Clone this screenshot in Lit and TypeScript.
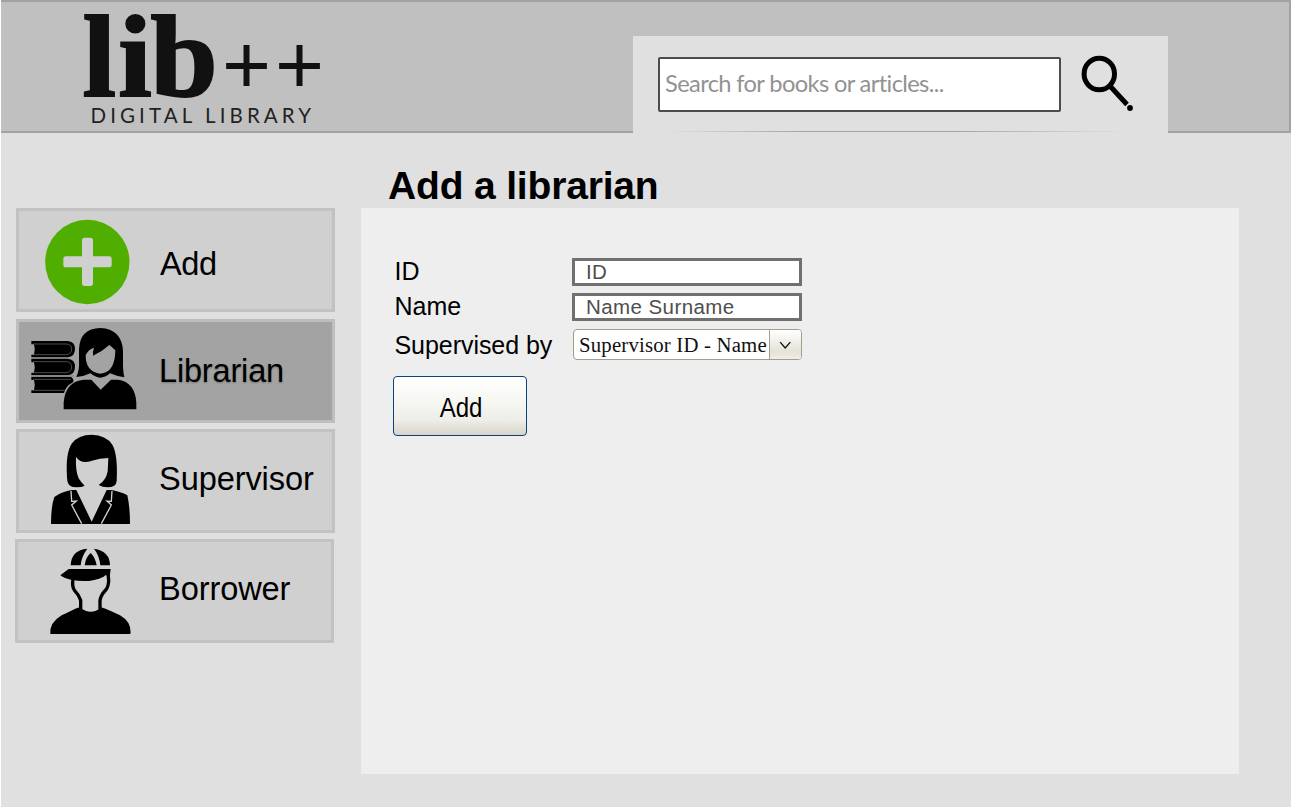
import { LitElement, html, svg, css } from "lit";
import { customElement, property, state } from "lit/decorators.js";
import { classMap } from "lit/directives/class-map.js";

const addIcon = svg`
  <circle cx="262" cy="186" r="126.5" fill="#50ae00"/>
  <path d="M254 113h17q8 0 8 8v48h48q8 0 8 8v17q0 8-8 8h-48v48q0 8-8 8h-17q-8 0-8-8v-48h-48q-8 0-8-8v-17q0-8 8-8h48v-48q0-8 8-8z" fill="#d0d0d0"/>`;

const librarianIcon = svg`
  <g>
    <path d="M94 78H203Q225 80 225 102Q225 125 203 127H94V119H102Q107 103 102 88H94Z"/>
    <path d="M94 131H203Q225 133 225 155Q225 178 203 181H94V173H102Q107 157 102 142H94Z"/>
    <path d="M94 185H212Q222 190 220 201L205 211Q197 219 192 234H94V226H102Q107 211 102 195H94Z"/>
    <path d="M99 87H199Q215 88 215 102Q215 117 199 119H99M99 140H199Q215 142 215 156Q215 170 199 173H99M99 193H212M99 226H194" fill="none" stroke="#707070" stroke-width="2"/>
    <path d="M96 183H222" stroke="#85908a" stroke-width="4"/>
  </g>
  <path d="M229 186Q239 165 237 136V103Q239 41 301 39Q365 42 369 107V134Q368 165 373 187Q348 183 330 175Q315 188 301 188Q285 187 271 175Q251 185 229 186Z"/>
  <path d="M257 120Q266 102 282 98Q277 112 279 122Q307 109 328 90Q337 97 346 106Q345 174 301 176Q256 170 257 120Z" fill="#a3a3a3"/>
  <path d="M191 283V262Q196 199 252 194H274L302 224L333 194H354Q405 201 409 263V283Z"/>`;

const supervisorIcon = svg`
  <path d="M201 157Q196 84 216 55Q235 29 275 29Q318 30 337 59Q354 89 350 168Q349 187 322 187Q307 187 296 180Q318 167 323 139L325 99Q299 99 276 107Q243 119 228 95Q226 138 236 160Q244 174 254 182Q243 188 219 186Q201 184 201 157Z"/>
  <path d="M153 297Q153 243 163 216Q183 201 214 195H229L275 290L320 195H336Q367 202 382 211Q390 246 390 297Z"/>
  <path d="M213 197L215 229L229 228L215 240L245 296M336 197L334 229L321 228L334 240L304 296" fill="none" stroke="#d0d0d0" stroke-width="4"/>`;

const borrowerIcon = svg`
  <path d="M212 91Q214 45 262 41Q244 65 242 91Z"/>
  <path d="M282 41Q330 49 330 91H301Q298 61 282 41Z"/>
  <path d="M254 91Q257 66 272 54Q286 68 290 91Z"/>
  <path d="M181 121L206 102H332L329 126L317 120L311 125Q268 146 213 134Q190 129 181 121Z"/>
  <path d="M219 132Q215 154 224 167Q237 180 242 196V222" fill="none" stroke="#000" stroke-width="10"/>
  <path d="M323 112Q326 127 326 139Q324 158 317 165Q302 181 300 196V222" fill="none" stroke="#000" stroke-width="10"/>
  <path d="M151 297Q148 263 185 241Q213 228 231 219Q238 216 242 219Q256 230 272 230Q290 230 300 219Q304 216 311 219Q336 229 360 241Q393 260 392 293Q392 297 388 297Z"/>`;

interface MenuEntry {
  label: string;
  slug: string;
  icon: unknown;
  viewBox: string;
}

const entries: MenuEntry[] = [
  { label: "Add", slug: "add", icon: addIcon, viewBox: "57 33 417 294" },
  { label: "Librarian", slug: "librarian", icon: librarianIcon, viewBox: "57 21 417 294" },
  { label: "Supervisor", slug: "supervisor", icon: supervisorIcon, viewBox: "57 21 417 294" },
  { label: "Borrower", slug: "borrower", icon: borrowerIcon, viewBox: "54 21 417 294" },
];

@customElement("lib-header")
export class LibHeader extends LitElement {
  static styles = css`
    :host { display: block; }
    .bar {
      box-sizing: border-box;
      height: 133px;
      display: flex;
      background: #c0c0c0;
      border: 2px solid #a2a2a2;
      border-left: 0;
    }
    .logo { flex: none; width: 632px; height: 129px; display: block; overflow: visible; }
    .word { font: bold 116px "Liberation Serif", serif; fill: #111; stroke: #111; stroke-width: 2; }
    .plus { font: 84px "Liberation Sans", sans-serif; fill: #111; }
    .tag { font: 20.5px Lato, sans-serif; fill: #222; }
    .search {
      box-sizing: border-box;
      width: 535px;
      height: 97px;
      margin-top: 34px;
      padding: 21px 0 0 25px;
      display: flex;
      background: linear-gradient(90deg, #e0e0e0 6%, #a4a4a4 32%, #a4a4a4 60%, #e0e0e0 92%) 0 95px / 100% 1px no-repeat, #e0e0e0;
    }
    .field {
      box-sizing: border-box;
      width: 403px;
      height: 55px;
      border: 2px solid #4c4c4c;
      border-radius: 2px;
      background: #fff;
      padding: 0 0 3px 5px;
      font: 23.7px Lato, sans-serif;
      letter-spacing: -0.64px;
      font-variant-ligatures: none;
      color: #444;
      outline: none;
    }
    .field::placeholder { color: #929292; opacity: 1; }
    .glass { width: 60px; height: 60px; margin: -3px 0 0 17px; display: block; }
  `;
  render() {
    return html`<header class="bar">
      <svg class="logo" viewBox="1 2 632 129" role="img" aria-label="lib++ digital library">
        <g transform="scale(1.04 1)">
          <text class="word" x="79.300 113.700 144.800" y="96">lib</text>
        </g>
        <text class="plus" x="222 275" y="93">++</text>
        <text class="tag" x="90.500" y="123" textLength="220.500" lengthAdjust="spacing">DIGITAL LIBRARY</text>
      </svg>
      <div class="search">
        <input class="field" placeholder="Search for books or articles..." />
        <svg class="glass" viewBox="1078 54 60 60">
          <ellipse cx="1099.300" cy="74" rx="15.200" ry="15.800" fill="none" stroke="#000" stroke-width="5"/>
          <path d="M1110 86L1127 104.500" stroke="#000" stroke-width="5"/>
          <circle cx="1130" cy="108" r="2.900"/>
        </svg>
      </div>
    </header>`;
  }
}

@customElement("lib-menu")
export class LibMenu extends LitElement {
  @property() selected = "librarian";
  static styles = css`
    :host { display: block; }
    .list { display: flex; flex-direction: column; gap: 6px; }
    .item {
      box-sizing: border-box;
      width: 319px;
      height: 104px;
      display: flex;
      padding: 0;
      border: 3px solid #c2c2c2;
      background: #d0d0d0;
      text-align: left;
      color: #000;
    }
    .add { margin-bottom: 1px; }
    .borrower { margin-left: -1px; }
    .active { background: #a3a3a3; border-color: #bebebe; }
    .icon { flex: none; width: 139px; height: 98px; display: block; }
    .label { font: 32.6px/40px "Liberation Sans", Arial, sans-serif; letter-spacing: -0.1px; padding-left: 1px; padding-top: 27px; }
    .add .label { padding-top: 33px; padding-left: 2px; letter-spacing: -0.4px; }
    .active .label { padding-top: 29px; letter-spacing: -0.2px; text-shadow: 0 1px 2px #777; }
    .borrower .label { padding-left: 2px; }
  `;
  render() {
    return html`<nav class="list">
      ${entries.map(
        (e) => html`<button class=${classMap({ item: true, [e.slug]: true, active: e.slug === this.selected })}>
          <svg class="icon" viewBox=${e.viewBox}>${e.icon}</svg>
          <span class="label">${e.label}</span>
        </button>`
      )}
    </nav>`;
  }
}

@customElement("librarian-form")
export class LibrarianForm extends LitElement {
  static styles = css`
    :host { display: block; }
    .panel {
      box-sizing: border-box;
      width: 878px;
      height: 566px;
      padding: 50px 0 0 32px;
      background: #eee;
    }
    .grid {
      display: grid;
      grid-template-columns: 179px 230px;
      grid-template-rows: 28px 28px 32px;
      row-gap: 7px;
    }
    .label { font: 25px/28px "Liberation Sans", Arial, sans-serif; color: #000; padding-left: 1.5px; white-space: nowrap; }
    .first { line-height: 26px; }
    .name { line-height: 27px; }
    .by { padding-top: 3px; letter-spacing: -0.05px; }
    .input {
      box-sizing: border-box;
      width: 230px;
      height: 28px;
      border: 3px solid #707070;
      background: #fff;
      padding: 0 0 0 11px;
      font: 20.5px "Liberation Sans", Arial, sans-serif;
      letter-spacing: 0.42px;
      outline: none;
      border-radius: 0;
    }
    .input::placeholder { color: #4e4e4e; opacity: 1; }
    .select {
      box-sizing: border-box;
      height: 31px;
      margin: 1px 0 0 1px;
      display: flex;
      border: 1px solid #a59c8c;
      border-radius: 4px;
      background: #fff;
      overflow: hidden;
    }
    .value { flex: 1; padding-left: 5px; font: 20.8px/29px "Liberation Serif", "Times New Roman", serif; letter-spacing: 0.18px; white-space: nowrap; color: #111; }
    .arrow { box-sizing: border-box; width: 32px; height: 29px; border-left: 1px solid #a59c8c; background: linear-gradient(#fff, #f3f1ec 35%, #e6e2d8 75%, #f0ede6); display: block; }
    .submit {
      box-sizing: border-box;
      display: block;
      width: 134px;
      height: 60px;
      margin-top: 16px;
      padding: 5px 0 0 2px;
      border: 1.5px solid #0b4380;
      border-radius: 4px;
      background: linear-gradient(#fff, #f5f5f0 50%, #eeeee8 74%, #d8d4c8);
      color: #000;
      font: 27px "Liberation Sans", Arial, sans-serif;
    }
    .squeeze { display: inline-block; transform: scaleX(0.89); }
  `;
  render() {
    return html`<section class="panel">
      <div class="grid">
        <span class="label first">ID</span><input class="input" placeholder="ID" />
        <span class="label name">Name</span><input class="input" placeholder="Name Surname" />
        <span class="label by">Supervised by</span>
        <div class="select">
          <span class="value">Supervisor ID - Name</span>
          <svg class="arrow" viewBox="0 0 32 29"><path d="M10.500 12L15.700 18L21 12" fill="none" stroke="#111" stroke-width="1.400"/></svg>
        </div>
      </div>
      <button class="submit"><span class="squeeze">Add</span></button>
    </section>`;
  }
}

@customElement("app-root")
export class AppRoot extends LitElement {
  @state() private section = "librarian";
  static styles = css`
    :host { display: block; height: 810px; background: #fff; overflow: hidden; }
    .shell { width: 1290px; height: 807px; margin-left: 1px; background: #e0e0e0; }
    .body { display: flex; }
    .side { width: 345px; padding: 75px 0 0 15px; }
    .main { padding-top: 30px; }
    .title { margin: 0; padding-left: 27px; height: 45px; font: bold 39px/45px "Liberation Sans", Arial, sans-serif; letter-spacing: -0.17px; color: #000; }
  `;
  render() {
    return html`<div class="shell">
      <lib-header></lib-header>
      <div class="body">
        <lib-menu class="side" .selected=${this.section}></lib-menu>
        <main class="main">
          <h1 class="title">Add a librarian</h1>
          <librarian-form></librarian-form>
        </main>
      </div>
    </div>`;
  }
}
